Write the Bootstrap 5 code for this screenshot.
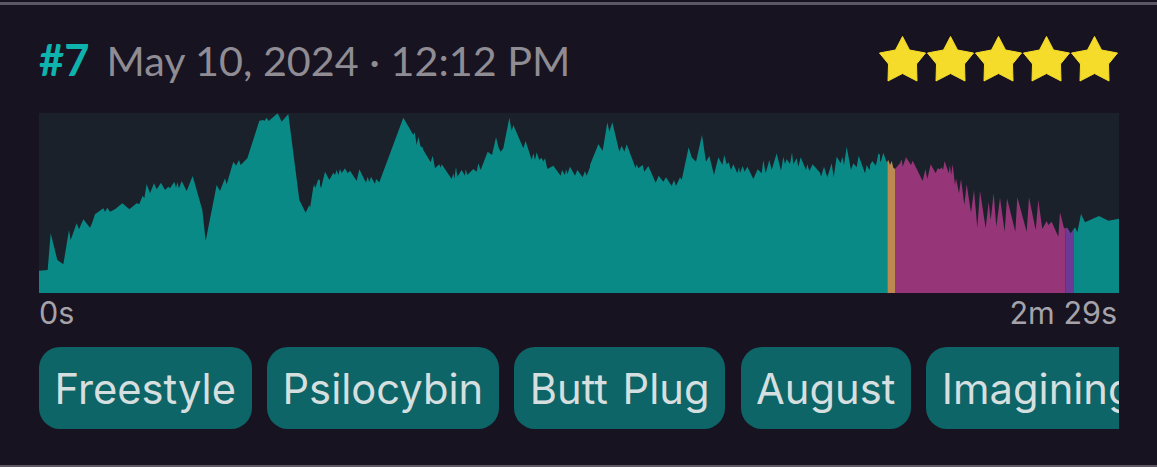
<!DOCTYPE html>
<html lang="en">
<head>
<meta charset="utf-8">
<title>Session #7</title>
<link href="https://cdn.jsdelivr.net/npm/bootstrap@5.3.0/dist/css/bootstrap.min.css" rel="stylesheet">
<style>
html, body { height: 100%; }
body { background: #181320; overflow: hidden; }
.sess-card { background: #181320; border-top: 3px solid #5d5763; border-bottom: 2px solid #5d5763; margin-top: 2px; height: 465px; padding: 0 38px 0 39px; }
.sess-head { height: 108px; padding-top: 26px; }
.sess-title { font-family: Lato, "Liberation Sans", sans-serif; font-size: 41.3px; font-weight: 400; line-height: 56px; color: #8f8c93; white-space: nowrap; }
.sess-num { color: #0fb3ad; font-size: 43.5px; font-weight: 700; margin-right: 17px; }
.sess-stars { width: 240px; height: 46px; margin-top: 5px; }
.sess-chart { display: block; width: 1080px; height: 180px; }
.sess-axis { font-family: Inter, "Liberation Sans", sans-serif; font-size: 30.5px; font-weight: 400; line-height: 40px; color: #a5a3a9; height: 54px; padding: 0 2px 0 0; }
.sess-tags { gap: 15.5px; overflow: hidden; width: 1080px; }
.sess-tag { flex: none; height: 82px; padding: 0 15.5px; border-radius: 21px; background: #0e6567; color: #d6dfdf; font-family: Inter, "Liberation Sans", sans-serif; font-size: 41.7px; font-weight: 400; word-spacing: 3px; line-height: 85px; white-space: nowrap; }
</style>
</head>
<body>
<main class="sess-card">
  <div class="sess-head d-flex justify-content-between align-items-start">
    <div class="sess-title"><span class="sess-num">#7</span>May 10, 2024 · 12:12 PM</div>
    <svg class="sess-stars" viewBox="0 0 240 46" aria-label="5 stars" fill="#f5dc2a" stroke="#f5dc2a" stroke-width="1" stroke-linejoin="round">
      <defs><polygon id="onestar" points="23.5,0.5 30.5,14 46.5,17 37.5,28 38,45 23.5,37.5 9,45 9.5,28 0.5,17 16.5,14"/></defs>
      <use href="#onestar"/>
      <use href="#onestar" x="48"/>
      <use href="#onestar" x="96"/>
      <use href="#onestar" x="144"/>
      <use href="#onestar" x="192"/>
    </svg>
  </div>
  <svg class="sess-chart" viewBox="0 0 3240 540" preserveAspectRatio="none" aria-label="Intensity over time">
    <defs>
      <clipPath id="chartarea">
        <polygon transform="translate(-27 -24)" points="27,564 27,497 53,495 62,385 82,465 100,478 117,375 122,405 140,355 147,373 160,343 180,368 186,355 195,328 220,310 225,320 232,308 240,320 255,313 277,295 298,313 320,295 328,297 338,272 343,280 350,237 360,265 372,235 380,253 393,233 405,255 415,245 420,250 433,230 438,248 442,232 447,250 455,228 470,258 488,213 517,315 527,408 560,240 570,258 585,220 590,238 610,170 618,182 627,165 632,180 652,160 688,47 700,45 703,48 710,38 716,48 743,25 755,50 775,27 808,285 827,323 838,300 842,312 852,237 857,255 867,222 870,228 870,564"/>
        <polygon transform="translate(813 -24)" points="0,564 0,310 10,245 15,252 25,222 33,250 45,200 58,225 70,203 75,210 80,195 85,210 90,192 95,205 105,190 113,205 120,197 140,228 148,193 168,233 173,215 178,232 183,215 195,237 198,222 208,232 280,38 310,90 314,82 320,120 325,95 332,125 337,125 340,135 362,172 368,152 375,190 388,178 392,188 395,178 425,222 430,205 433,222 438,185 442,215 455,195 465,212 467,192 472,210 490,192 500,200 505,175 512,195 533,140 546,150 558,97 566,128 572,140 580,130 598,38 605,78 610,60 640,130 647,108 665,165 670,145 675,165 680,142 688,165 695,158 700,170 705,160 712,192 730,182 752,212 756,195 765,210 768,192 772,208 780,185 795,212 802,195 818,217 825,198 830,212 866,118 870,125 870,564"/>
        <polygon transform="translate(1653 -24)" points="0,564 0,180 25,118 38,137 52,52 58,80 67,52 88,140 95,122 103,140 110,118 137,190 140,178 145,190 158,180 163,200 175,183 197,233 206,212 220,230 228,217 245,243 252,225 258,243 270,217 275,225 296,127 305,157 318,170 336,90 348,170 358,153 372,210 385,157 397,180 403,150 410,178 416,172 423,195 430,178 442,205 447,185 450,205 458,183 464,200 472,185 490,222 503,193 515,205 520,165 527,205 538,165 545,195 560,145 573,197 580,155 585,177 590,162 600,177 606,142 610,178 620,160 625,185 632,157 648,195 652,178 658,198 668,178 690,203 693,215 702,185 712,217 725,175 731,217 740,155 752,175 757,155 762,180 770,125 783,195 790,175 800,187 806,152 825,205 830,180 838,195 847,168 858,183 865,145 870,150 870,564"/>
        <polygon transform="translate(2493 -24)" points="0,564 0,180 7,168 17,185 25,147 32,172 40,143 50,172 55,165 60,180 65,168 70,188 75,192 90,175 95,163 98,185 108,157 123,180 128,167 158,228 166,193 172,222 182,178 197,205 203,190 210,193 215,187 219,195 224,168 236,205 240,180 243,210 248,178 255,240 258,220 267,265 273,222 283,300 290,238 303,323 312,255 322,368 330,257 347,370 356,290 362,345 371,265 379,365 390,278 404,380 411,280 436,380 442,277 470,380 477,277 497,375 505,285 517,372 530,348 535,360 545,350 565,395 570,322 582,370 592,368 602,385 615,367 622,382 633,327 645,352 687,333 715,347 747,341 747,564"/>
      </clipPath>
    </defs>
    <rect width="3240" height="540" fill="#1b212a"/>
    <g clip-path="url(#chartarea)">
      <rect x="0" width="2545" height="540" fill="#0a8a87"/>
      <rect x="2545" width="23" height="540" fill="#bc8a50"/>
      <rect x="2568" width="512" height="540" fill="#963577"/>
      <rect x="3080" width="23" height="540" fill="#6b3a96"/>
      <rect x="3103" width="137" height="540" fill="#0a8a87"/>
    </g>
  </svg>
  <div class="sess-axis d-flex justify-content-between"><span>0s</span><span>2m 29s</span></div>
  <div class="sess-tags d-flex">
    <span class="sess-tag">Freestyle</span>
    <span class="sess-tag">Psilocybin</span>
    <span class="sess-tag">Butt Plug</span>
    <span class="sess-tag">August</span>
    <span class="sess-tag">Imagining</span>
  </div>
</main>
<script src="https://cdn.jsdelivr.net/npm/bootstrap@5.3.0/dist/js/bootstrap.bundle.min.js"></script>
</body>
</html>
